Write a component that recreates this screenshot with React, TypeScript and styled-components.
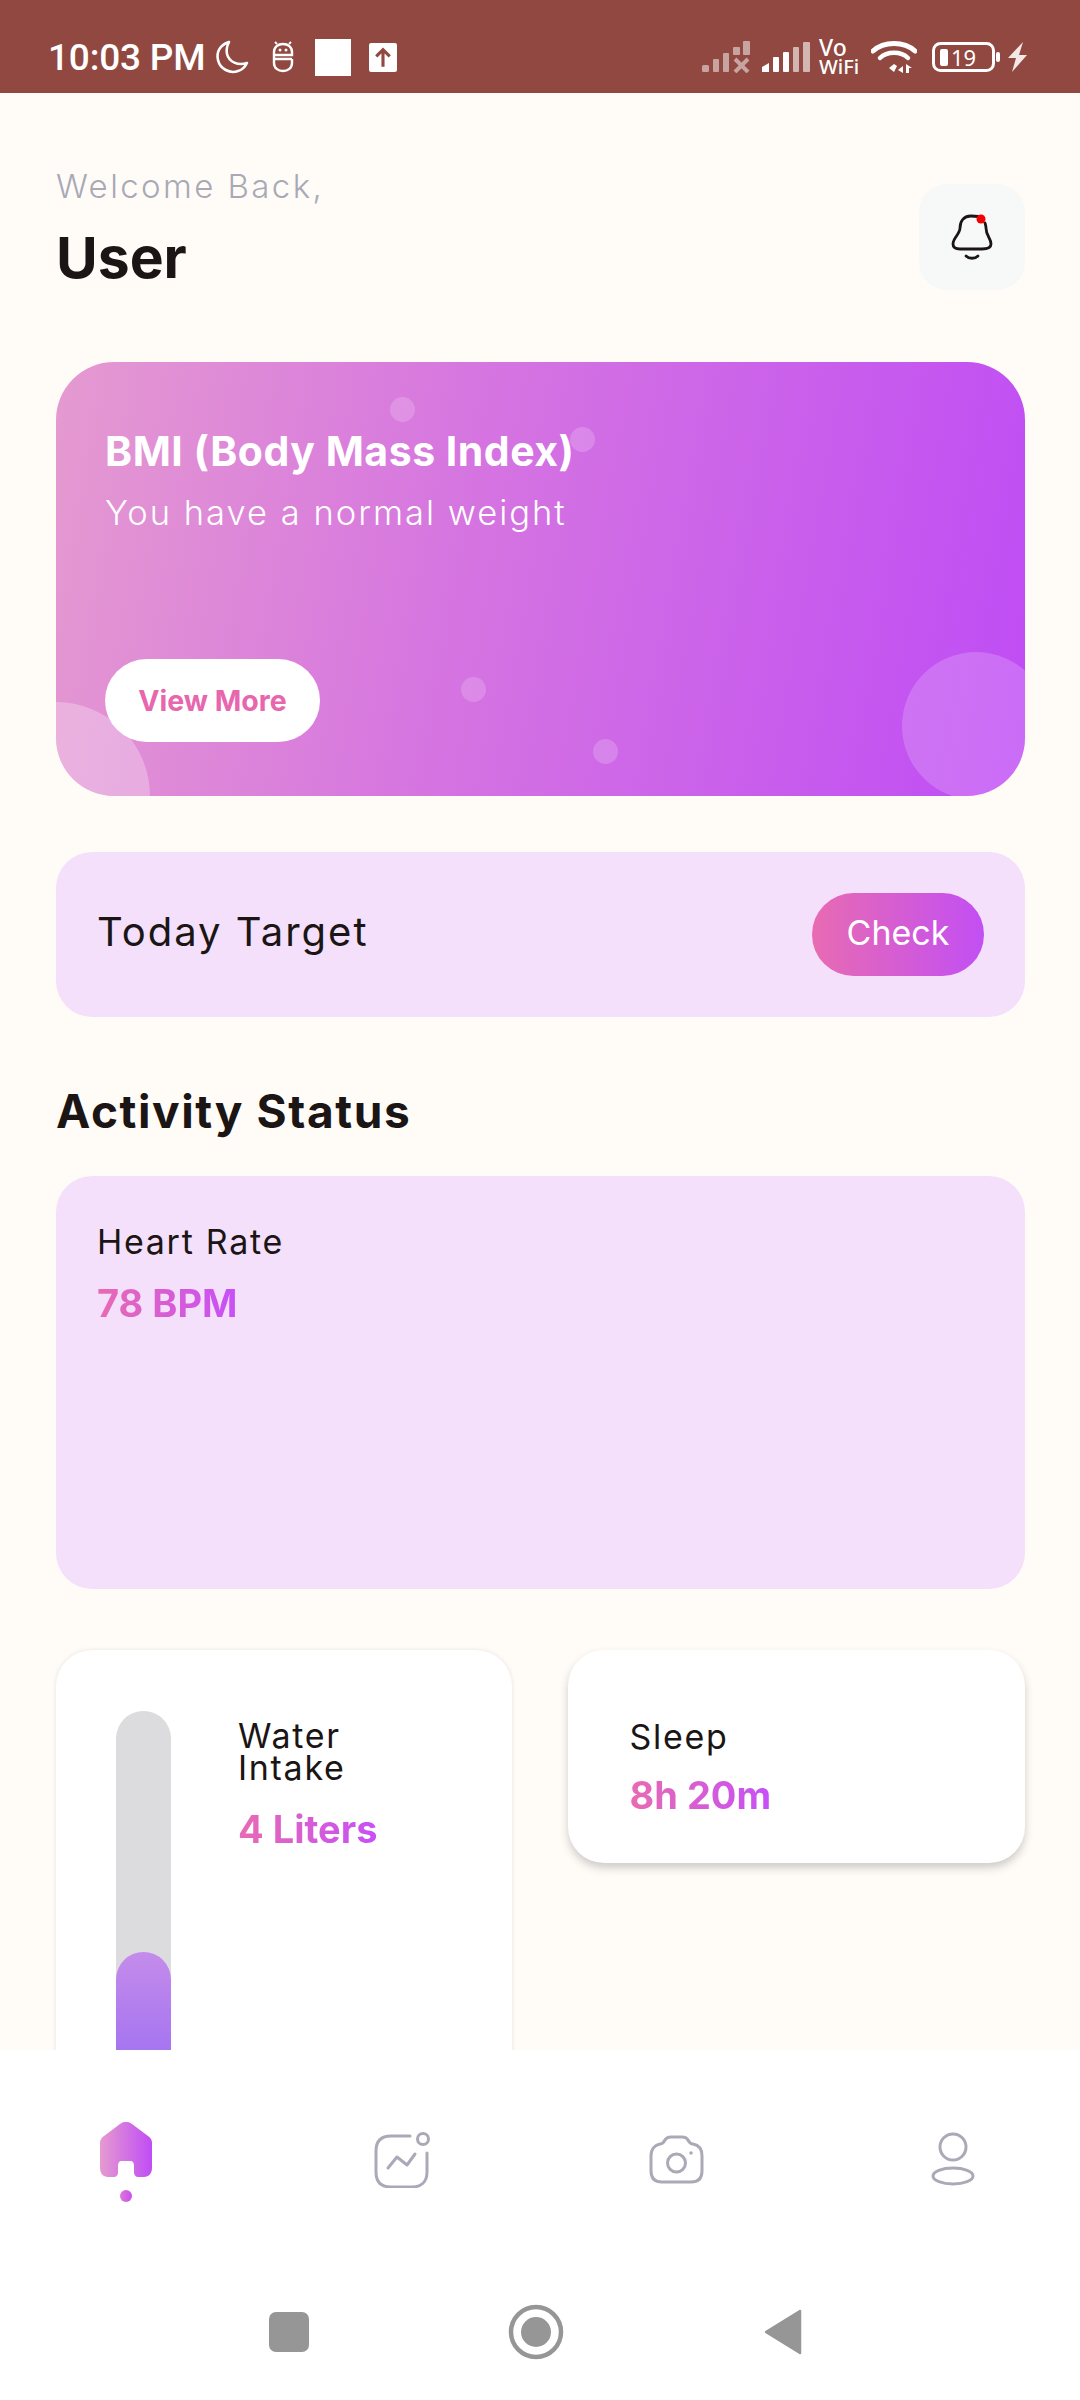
import React from "react";
import styled, { createGlobalStyle } from "styled-components";

const GlobalStyle = createGlobalStyle`
  html, body {
    margin: 0;
    padding: 0;
    background: #fffcf8;
    font-family: "Inter", "Liberation Sans", sans-serif;
  }
  * { box-sizing: border-box; }
`;

const Screen = styled.div`
  width: 1080px;
  height: 2400px;
  display: flex;
  flex-direction: column;
  overflow: hidden;
  background: #fffcf8;
  color: #1b1515;
`;

/* status bar */
const StatusBar = styled.div`
  height: 93px;
  flex: none;
  background: #914840;
  display: flex;
  align-items: center;
  justify-content: space-between;
  padding: 21px 52px 0 48px;
  color: #fff;
`;
const StatusGroup = styled.div`
  display: flex;
  align-items: center;
`;
const Clock = styled.span`
  width: 166px;
  font-family: "Roboto", sans-serif;
  font-size: 37px;
  font-weight: 500;
  letter-spacing: -0.2px;
  white-space: nowrap;
`;
const StatusIcon = styled.svg<{ $gap?: number }>`
  display: block;
  flex: none;
  margin-left: ${(p) => p.$gap ?? 0}px;
`;
const WhiteSquare = styled.div`
  width: 36px;
  height: 37px;
  margin-left: 20px;
  background: #fff;
`;
const VoWifi = styled.div`
  width: 42px;
  margin-left: 9px;
  font-family: "Noto Sans", sans-serif;
  font-weight: 500;
  color: #fff;
  white-space: nowrap;
`;
const VoLine = styled.div<{ $size: number }>`
  height: 19px;
  font-size: ${(p) => p.$size}px;
  line-height: 19px;
`;

/* content */
const Main = styled.div`
  flex: 1;
  min-height: 0;
  overflow: hidden;
  padding: 91px 55px 0 56px;
`;
const Header = styled.div`
  display: flex;
  justify-content: space-between;
  height: 106px;
`;
const Welcome = styled.div`
  font-size: 33px;
  font-weight: 300;
  color: #a9a9b6;
  letter-spacing: 2.4px;
  line-height: 40px;
  margin-top: -18px;
`;
const UserName = styled.div`
  font-size: 57px;
  font-weight: 700;
  line-height: 64px;
  margin-top: 20px;
`;
const BellButton = styled.div`
  width: 106px;
  height: 106px;
  border-radius: 28px;
  background: #f7f8f8;
  display: flex;
  align-items: center;
  justify-content: center;
`;

const BmiCard = styled.div`
  position: relative;
  overflow: hidden;
  height: 434px;
  margin-top: 72px;
  padding: 65px 49px 54px;
  border-radius: 58px;
  background: linear-gradient(100deg, #e59ad0 0%, #d676e0 40%, #bf4cf5 100%);
  display: flex;
  flex-direction: column;
  color: #fff;
`;
const Bubble = styled.span<{ $x: number; $y: number; $size: number; $alpha: number }>`
  position: absolute;
  left: ${(p) => p.$x}px;
  top: ${(p) => p.$y}px;
  width: ${(p) => p.$size}px;
  height: ${(p) => p.$size}px;
  border-radius: 50%;
  background: rgba(255, 255, 255, ${(p) => p.$alpha});
`;
const BmiTitle = styled.div`
  position: relative;
  font-size: 41px;
  font-weight: 700;
  line-height: 48px;
  letter-spacing: 0.5px;
`;
const BmiText = styled.div`
  position: relative;
  font-size: 34.5px;
  font-weight: 300;
  line-height: 44px;
  letter-spacing: 2px;
  margin-top: 16px;
`;
const ViewMore = styled.div`
  position: relative;
  margin-top: auto;
  width: 215px;
  height: 83px;
  border-radius: 42px;
  background: #fff;
  color: #e766ad;
  font-size: 28.5px;
  font-weight: 700;
  display: flex;
  align-items: center;
  justify-content: center;
`;

const TargetCard = styled.div`
  height: 165px;
  margin-top: 56px;
  padding: 0 41px 0 41px;
  border-radius: 36px;
  background: #f4e0fa;
  display: flex;
  align-items: center;
  justify-content: space-between;
`;
const TargetLabel = styled.div`
  font-size: 40px;
  font-weight: 400;
  letter-spacing: 2px;
  margin-top: -6px;
`;
const CheckButton = styled.div`
  width: 172px;
  height: 83px;
  margin-top: -1px;
  border-radius: 42px;
  background: linear-gradient(90deg, #e86bb2, #c24ff3);
  color: #fff;
  font-size: 34px;
  font-weight: 400;
  display: flex;
  align-items: center;
  justify-content: center;
  padding-bottom: 3px;
`;

const SectionTitle = styled.div`
  font-size: 46px;
  font-weight: 700;
  line-height: 50px;
  margin-top: 69px;
  letter-spacing: 1.6px;
`;

const HeartCard = styled.div`
  height: 413px;
  margin-top: 40px;
  padding: 50px 41px;
  border-radius: 36px;
  background: #f4e0fa;
`;
const MetricLabel = styled.div`
  font-size: 34px;
  font-weight: 400;
  line-height: 32px;
  letter-spacing: 1.7px;
`;
const MetricValue = styled.div<{ $top: number }>`
  display: inline-block;
  margin-top: ${(p) => p.$top}px;
  font-size: 38px;
  font-weight: 700;
  line-height: 44px;
  background: linear-gradient(90deg, #e86bb2, #c74ff8);
  -webkit-background-clip: text;
  background-clip: text;
  color: transparent;
`;

const CardRow = styled.div`
  display: flex;
  align-items: flex-start;
  gap: 56px;
  margin-top: 61px;
`;
const WaterCard = styled.div`
  flex: 1;
  height: 660px;
  padding: 61px 40px 0 60px;
  border-radius: 36px;
  background: #fff;
  box-shadow: 0 0 4px rgba(80, 60, 50, 0.14);
  display: flex;
  gap: 67px;
`;
const WaterBar = styled.div`
  position: relative;
  overflow: hidden;
  flex: none;
  width: 55px;
  height: 540px;
  border-radius: 28px;
  background: #dcdcde;
`;
const WaterFill = styled.div`
  position: absolute;
  left: 0;
  right: 0;
  bottom: 0;
  height: 299px;
  border-radius: 28px;
  background: linear-gradient(180deg, #c48ceb, #9b6cf2 45%);
`;
const WaterInfo = styled.div`
  padding-top: 9px;
`;
const SleepCard = styled.div`
  flex: 1;
  height: 213px;
  padding: 71px 40px 0 62px;
  border-radius: 36px;
  background: #fff;
  box-shadow: 0 5px 9px rgba(60, 50, 50, 0.24);
`;

/* bottom */
const BottomNav = styled.div`
  height: 350px;
  flex: none;
  background: #fff;
  display: flex;
  flex-direction: column;
`;
const Tabs = styled.div`
  height: 230px;
  padding: 72px 99px 0 98px;
  display: flex;
  justify-content: space-between;
`;
const Tab = styled.div<{ $top?: number }>`
  width: 56px;
  padding-top: ${(p) => p.$top ?? 0}px;
  display: flex;
  flex-direction: column;
  align-items: center;
  gap: 13px;
`;
const ActiveDot = styled.span`
  width: 12px;
  height: 12px;
  border-radius: 50%;
  background: linear-gradient(90deg, #dd78d4, #c850ef);
`;
const SystemNav = styled.div`
  display: flex;
  align-items: center;
  justify-content: center;
  height: 104px;
  padding-right: 8px;
`;
const SysSlot = styled.div`
  width: 247px;
  display: flex;
  justify-content: center;
`;

const App = () => {
  return (
    <>
      <GlobalStyle />
      <Screen>
        <StatusBar>
          <StatusGroup>
            <Clock>10:03 PM</Clock>
            <StatusIcon width="35" height="36" viewBox="0 0 35 36">
              <path d="M15 3 C6 6 2 13 4 21 C6 30 16 35 24 32 C28 31 31 28 33 24 C24 27 15 23 13 15 C12 11 13 7 15 3 Z" fill="none" stroke="#fff" strokeWidth="2.6" strokeLinejoin="round" />
            </StatusIcon>
            <StatusIcon $gap={22} width="24" height="32" viewBox="0 0 24 32">
              <path d="M3 17 V11 C3 6 7 3 12 3 C17 3 21 6 21 11 V14 H3 M21 18 V22 C21 27 17 30 12 30 C7 30 3 27 3 22 V18 H21" fill="none" stroke="#fff" strokeWidth="2.4" />
              <circle cx="9" cy="9" r="1.5" fill="#fff" />
              <circle cx="15" cy="9" r="1.5" fill="#fff" />
              <path d="M4 1 L6 3 M20 1 L18 3" stroke="#fff" strokeWidth="2" />
            </StatusIcon>
            <WhiteSquare />
            <StatusIcon $gap={18} width="28" height="29" viewBox="0 0 27 28">
              <rect width="27" height="28" rx="2" fill="#fff" />
              <path d="M13.500 23 V7 M7 13 L13.500 6.500 L20 13" fill="none" stroke="#914840" strokeWidth="3" />
            </StatusIcon>
          </StatusGroup>
          <StatusGroup>
            <StatusIcon width="48" height="32" viewBox="0 0 48 32" opacity="0.5">
              <rect x="0" y="24" width="7" height="7" rx="1.500" fill="#fff" />
              <rect x="11" y="18" width="6" height="13" rx="1" fill="#fff" />
              <rect x="21" y="12" width="6" height="19" rx="1" fill="#fff" />
              <rect x="31" y="6" width="7" height="8" rx="1" fill="#fff" />
              <rect x="41" y="0" width="7" height="14" rx="1" fill="#fff" />
              <path d="M33 18 L46 31 M46 18 L33 31" stroke="#fff" strokeWidth="4" />
            </StatusIcon>
            <StatusIcon $gap={12} width="48" height="32" viewBox="0 0 48 32">
              <path d="M0 31 V26 L7 22 V31 Z" fill="#fff" />
              <rect x="11" y="16" width="6" height="15" rx="1" fill="#fff" />
              <rect x="21" y="11" width="6" height="20" rx="1" fill="#fff" />
              <rect x="31" y="6" width="6" height="25" rx="1" fill="#fff" opacity="0.6" />
              <rect x="41" y="1" width="7" height="30" rx="1" fill="#fff" opacity="0.6" />
            </StatusIcon>
            <VoWifi>
              <VoLine $size={23}>Vo</VoLine>
              <VoLine $size={20}>WiFi</VoLine>
            </VoWifi>
            <StatusIcon $gap={10} width="46" height="34" viewBox="0 0 46 34">
              <path d="M2 11 C13 1 33 1 44 11" fill="none" stroke="#fff" strokeWidth="5" strokeLinecap="round" />
              <path d="M9 18 C16 11 30 11 37 18" fill="none" stroke="#fff" strokeWidth="4.500" strokeLinecap="round" />
              <path d="M18 28 L23 24 L26 26 L23 32 Z" fill="#fff" />
              <path d="M32 26 L32 33 L27 30 Z M35 24 L35 33 H38 V28 H41 Z" fill="#fff" />
            </StatusIcon>
            <StatusIcon $gap={15} width="69" height="30" viewBox="0 0 69 30">
              <rect x="1.500" y="1.500" width="60" height="27" rx="7" fill="none" stroke="#fff" strokeWidth="3" />
              <rect x="8" y="7" width="8" height="17" rx="2" fill="#fff" />
              <text x="19" y="24" fontFamily="Noto Sans" fontSize="22" fill="#fff">19</text>
              <rect x="64" y="10" width="4" height="10" rx="2" fill="#fff" />
            </StatusIcon>
            <StatusIcon $gap={7} width="20" height="30" viewBox="0 0 20 30" opacity="0.88">
              <path d="M15 0 L0 16 H8 L4 30 L19 13 H11 Z" fill="#fff" />
            </StatusIcon>
          </StatusGroup>
        </StatusBar>

        <Main>
          <Header>
            <div>
              <Welcome>Welcome Back,</Welcome>
              <UserName>User</UserName>
            </div>
            <BellButton>
              <svg width="42" height="46" viewBox="0 0 42 46">
                <path d="M27 2.500 C24 2 22 2 20 2 C12 2 9 8 9 14 C9 20 2 24 2 30 C2 34 5 35 9 35 H31 C36 35 40 34 40 30 C40 24 35 22 35 14 C35 12 34.500 11 34 9" fill="none" stroke="#1b1515" strokeWidth="2.800" strokeLinecap="round" />
                <path d="M15 42 C18 45 24 45 27 42" fill="none" stroke="#1b1515" strokeWidth="2.800" strokeLinecap="round" />
                <circle cx="30" cy="5" r="4.500" fill="#f40000" />
              </svg>
            </BellButton>
          </Header>

          <BmiCard>
            <Bubble $x={334} $y={35} $size={25} $alpha={0.18} />
            <Bubble $x={514} $y={65} $size={25} $alpha={0.18} />
            <Bubble $x={405} $y={315} $size={25} $alpha={0.18} />
            <Bubble $x={537} $y={377} $size={25} $alpha={0.18} />
            <Bubble $x={846} $y={290} $size={148} $alpha={0.18} />
            <Bubble $x={-94} $y={340} $size={188} $alpha={0.28} />
            <BmiTitle>BMI (Body Mass Index)</BmiTitle>
            <BmiText>You have a normal weight</BmiText>
            <ViewMore>View More</ViewMore>
          </BmiCard>

          <TargetCard>
            <TargetLabel>Today Target</TargetLabel>
            <CheckButton>Check</CheckButton>
          </TargetCard>

          <SectionTitle>Activity Status</SectionTitle>

          <HeartCard>
            <MetricLabel>Heart Rate</MetricLabel>
            <MetricValue $top={23}>78 BPM</MetricValue>
          </HeartCard>

          <CardRow>
            <WaterCard>
              <WaterBar>
                <WaterFill />
              </WaterBar>
              <WaterInfo>
                <MetricLabel>
                  Water
                  <br />
                  Intake
                </MetricLabel>
                <MetricValue $top={23}>4 Liters</MetricValue>
              </WaterInfo>
            </WaterCard>
            <SleepCard>
              <MetricLabel>Sleep</MetricLabel>
              <MetricValue $top={20}>8h 20m</MetricValue>
            </SleepCard>
          </CardRow>
        </Main>

        <BottomNav>
          <Tabs>
            <Tab>
              <svg width="52" height="55" viewBox="0 0 52 55">
                <defs>
                  <linearGradient id="homeFill" x1="0" y1="0" x2="1" y2="0">
                    <stop offset="0" stopColor="#e59ad0" />
                    <stop offset="1" stopColor="#c04df5" />
                  </linearGradient>
                </defs>
                <path d="M20 2 C24 -1 28 -1 32 2 L48 14 C51 16 52 18 52 21 V46 C52 51 49 55 44 55 H38 C36 55 34 53 34 51 V44 C34 41 33 39 30 39 H22 C19 39 18 41 18 44 V51 C18 53 16 55 14 55 H8 C3 55 0 51 0 46 V21 C0 18 1 16 4 14 Z" fill="url(#homeFill)" />
              </svg>
              <ActiveDot />
            </Tab>
            <Tab $top={10}>
              <svg width="56" height="56" viewBox="0 0 56 56">
                <path d="M36 4 H17 C7 4 2 9 2 19 V40 C2 50 7 55 17 55 H38 C47 55 53 50 53 40 V21" fill="none" stroke="#aba9b7" strokeWidth="3" strokeLinecap="round" />
                <circle cx="49" cy="7" r="5.500" fill="none" stroke="#aba9b7" strokeWidth="3" />
                <path d="M14 36 L23 25 L33 33 L41 22" fill="none" stroke="#aba9b7" strokeWidth="3" strokeLinecap="round" strokeLinejoin="round" />
              </svg>
            </Tab>
            <Tab $top={13}>
              <svg width="56" height="52" viewBox="0 0 56 52">
                <path d="M2 21 C2 14 6 10 11 9 C14 9 15 7 16 5 C17 3 19 2 22 2 H33 C36 2 38 3 39 5 C40 7 41 9 44 9 C50 10 53 14 53 21 V36 C53 44 49 47 42 47 H13 C6 47 2 44 2 36 Z" fill="none" stroke="#aba9b7" strokeWidth="3" strokeLinejoin="round" />
                <circle cx="27.500" cy="28" r="9" fill="none" stroke="#aba9b7" strokeWidth="3" />
                <circle cx="42" cy="18" r="1.800" fill="#aba9b7" />
              </svg>
            </Tab>
            <Tab $top={10}>
              <svg width="44" height="56" viewBox="0 0 44 56">
                <circle cx="22" cy="15" r="13" fill="none" stroke="#aba9b7" strokeWidth="3" />
                <ellipse cx="22" cy="44" rx="20" ry="8" fill="none" stroke="#aba9b7" strokeWidth="3" />
              </svg>
            </Tab>
          </Tabs>
          <SystemNav>
            <SysSlot>
              <svg width="40" height="40" viewBox="0 0 40 40">
                <rect width="40" height="40" rx="7" fill="#969696" />
              </svg>
            </SysSlot>
            <SysSlot>
              <svg width="56" height="56" viewBox="0 0 56 56">
                <circle cx="28" cy="28" r="25" fill="none" stroke="#969696" strokeWidth="4.500" />
                <circle cx="28" cy="28" r="15" fill="#969696" />
              </svg>
            </SysSlot>
            <SysSlot>
              <svg width="38" height="46" viewBox="0 0 38 46">
                <path d="M36 2 V44 L2 23 Z" fill="#969696" stroke="#969696" strokeWidth="2.500" strokeLinejoin="round" />
              </svg>
            </SysSlot>
          </SystemNav>
        </BottomNav>
      </Screen>
    </>
  );
};

export default App;
